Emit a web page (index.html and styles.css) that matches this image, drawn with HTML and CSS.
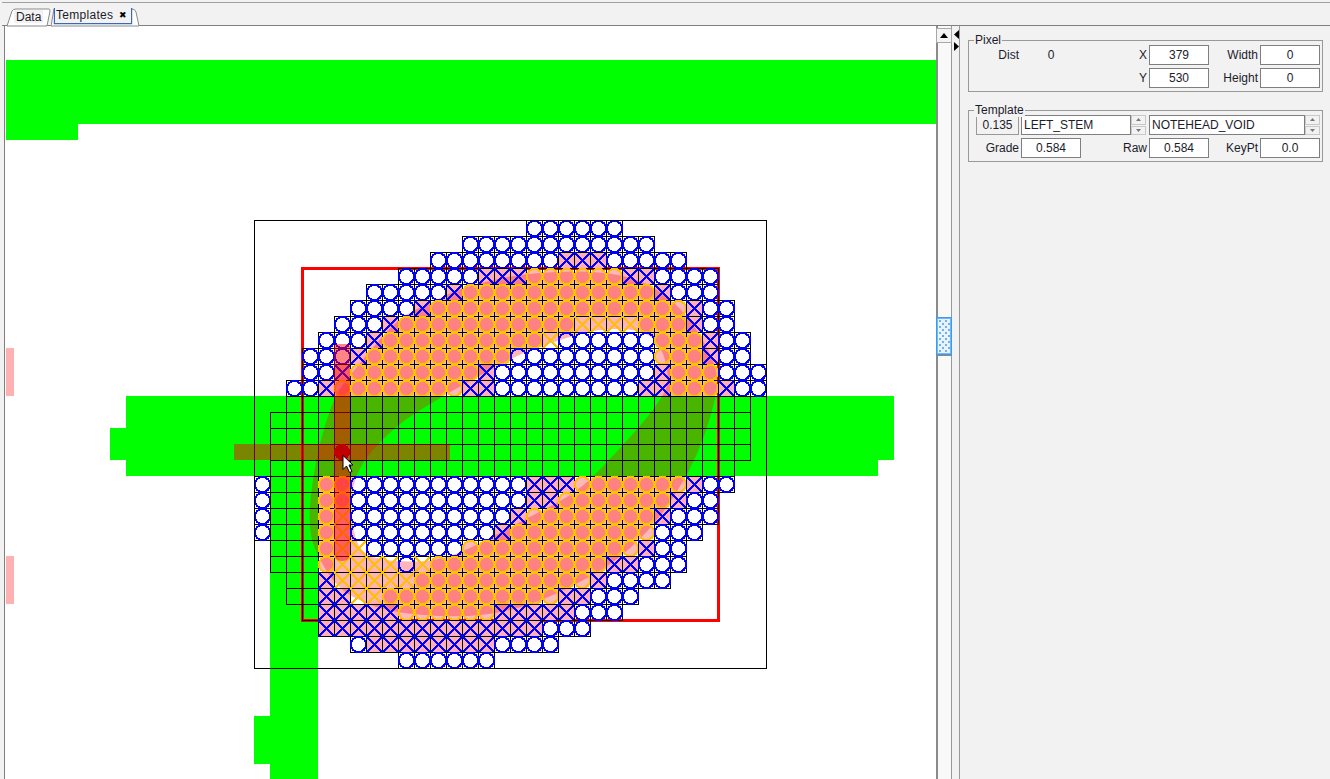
FILE: index.html
```html
<!DOCTYPE html>
<html lang="en">
<head>
<meta charset="utf-8">
<title>Templates</title>
<link rel="stylesheet" href="styles.css">
</head>
<body>
<div class="tabbar">
  <div class="tab tab-data">
    <svg class="tab-shape" width="44" height="24" viewBox="0 0 44 24"><path class="tab-fill" d="M0 23 L5 8 Q6 6 9 6 H42 Q43 6 43 8 L40 23 Z"/></svg>
    <span class="tab-label">Data</span>
  </div>
  <div class="tab tab-templates">
    <svg class="tab-shape" width="90" height="24" viewBox="0 0 90 24"><path class="tab-fill" d="M0 23 L3 6 H81 Q84 6 85 9 L88 23 Z"/><path class="tab-focus" d="M3.5 5 V20.5 H80.5 V5"/></svg>
    <span class="tab-label">Templates</span>
    <span class="tab-close">✖</span>
  </div>
</div>
<div class="main">
  <div class="canvas"><svg id="board" class="board" width="931" height="753" viewBox="5 26 931 753"></svg></div>
  <div class="scrollbar">
    <div class="scroll-btn"><svg width="8" height="5" viewBox="0 0 8 5"><path d="M4 0 L8 5 H0 Z"/></svg></div>
    <div class="scroll-thumb"></div>
  </div>
  <div class="divider">
    <svg width="5" height="9" viewBox="0 0 5 9"><path d="M5 0 V9 L0 4.5 Z"/></svg>
    <svg width="5" height="9" viewBox="0 0 5 9"><path d="M0 0 V9 L5 4.5 Z"/></svg>
  </div>
  <div class="panel">
    <section class="group group-pixel">
      <div class="legend">Pixel</div>
      <div class="form">
        <div class="lab">Dist</div><div class="val">0</div>
        <div class="lab">X</div><div class="field">379</div>
        <div class="lab">Width</div><div class="field">0</div>
        <div class="lab span-3">Y</div><div class="field">530</div>
        <div class="lab">Height</div><div class="field">0</div>
      </div>
    </section>
    <section class="group group-template">
      <div class="legend">Template</div>
      <div class="form">
        <div class="field readonly">0.135</div>
        <div class="combo combo-left">
          <div class="field name">LEFT_STEM</div>
          <div class="spin"><div class="spin-btn"><svg width="5" height="3" viewBox="0 0 5 3"><path d="M2.5 0 L5 3 H0 Z"/></svg></div><div class="spin-btn"><svg width="5" height="3" viewBox="0 0 5 3"><path d="M0 0 H5 L2.5 3 Z"/></svg></div></div>
        </div>
        <div class="combo combo-right">
          <div class="field name">NOTEHEAD_VOID</div>
          <div class="spin"><div class="spin-btn"><svg width="5" height="3" viewBox="0 0 5 3"><path d="M2.5 0 L5 3 H0 Z"/></svg></div><div class="spin-btn"><svg width="5" height="3" viewBox="0 0 5 3"><path d="M0 0 H5 L2.5 3 Z"/></svg></div></div>
        </div>
        <div class="lab">Grade</div><div class="field">0.584</div>
        <div class="lab">Raw</div><div class="field">0.584</div>
        <div class="lab">KeyPt</div><div class="field">0.0</div>
      </div>
    </section>
  </div>
</div>
<script src="app.js"></script>
</body>
</html>
```
FILE: styles.css
```css
* { box-sizing: border-box; }
html, body { margin: 0; padding: 0; }
body {
  width: 1330px; height: 779px; overflow: hidden;
  background: #f2f2f2; color: #1c1c2c;
  font: 12px/14px "Liberation Sans", Arial, sans-serif;
}

/* tabs */
.tabbar {
  height: 24px; margin: 2px 0 0 2px; padding-left: 5px;
  display: flex; align-items: flex-end;
  border-top: 1px solid #a0a0a0; border-bottom: 1px solid #808080;
}
.tab { position: relative; height: 23px; margin-bottom: -1px; }
.tab-data { width: 44px; }
.tab-templates { width: 90px; }
.tab-shape { position: absolute; left: 0; top: 0; }
.tab-fill { fill: #fff; stroke: #8a8a8a; stroke-width: 1; }
.tab-focus { fill: none; stroke: #3a6ab4; stroke-width: 1.4; }
.tab-label { position: absolute; background: #f2f2f2; }
.tab-data .tab-label { left: 7px; top: 7px; padding: 0 2px; height: 13px; }
.tab-templates .tab-label { left: 4px; top: 5px; width: 76px; height: 15px; padding-left: 1px; letter-spacing: 0.3px; }
.tab-close { position: absolute; left: 68px; top: 5px; font-size: 9px; color: #000; font-family: "DejaVu Sans", sans-serif; }

/* main row */
.main { display: flex; height: 753px; }
.canvas { width: 936px; padding-left: 4px; }
.board { display: block; background: #fff; border-left: 1px solid #808080; width: 932px; }
.scrollbar {
  width: 16px; padding-top: 2px; background: #f9f9f9;
  border-left: 2px solid #8a8a8a; border-right: 1px solid #999;
}
.scroll-btn {
  height: 15px; margin-left: -2px; margin-right: -1px;
  display: flex; align-items: center; justify-content: center;
  background: #f4f4f4; border: 1px solid #a8a8a8;
}
.scroll-thumb {
  height: 38px; margin: 274px -1px 0 -2px;
  border: 1px solid #3a9cf0;
  background-color: #e8f3fe;
  background-image: radial-gradient(#6cb0ec 0.7px, transparent 1px), radial-gradient(#6cb0ec 0.7px, transparent 1px);
  background-size: 6px 6px;
  background-position: 0 0, 3px 3px;
  box-shadow: inset 0 0 0 1px #6fb8f6, 0 1px 0 #888;
}
.divider {
  width: 8px; padding: 4px 0 0 2px;
  display: flex; flex-direction: column; gap: 3px;
  border-right: 1px solid #999;
}
.divider svg { display: block; }

/* right panel */
.panel { width: 370px; padding: 14px 7px 0 8px; }
.group { position: relative; border: 1px solid #999; padding: 4px 2px 3px 0; }
.group-template { margin-top: 18px; padding-bottom: 3px; }
.legend { position: absolute; left: 5px; top: -8px; padding: 0 1px; background: #f2f2f2; }
.form {
  display: grid; grid-template-columns: 52px 60px 68px 60px 51px 60px;
  grid-auto-rows: 20px; row-gap: 3px;
}
.lab { text-align: right; padding-right: 2px; line-height: 20px; }
.span-3 { grid-column: 3; }
.val { text-align: center; line-height: 20px; }
.field {
  background: #fff; border: 1px solid #7f7f7f;
  text-align: center; line-height: 18px;
}
.readonly { background: #f2f2f2; width: 43px; margin-left: 7px; border-color: #999; }
.combo { display: flex; }
.combo-left { grid-column: 2 / span 2; width: 125px; }
.combo-right { grid-column: 4 / span 3; }
.name { flex: 1; text-align: left; padding-left: 2px; }
.spin { width: 15px; display: flex; flex-direction: column; gap: 1px; }
.spin-btn {
  flex: 1; display: flex; align-items: center; justify-content: center;
  background: #f2f2f2; border: 1px solid #c8c8c8;
}
.spin-btn path { fill: #777; }

/* notehead canvas */
.green { fill: #00ff00; }
.pale { fill: #ffb0b0; }
.frame { fill: none; stroke: #000; stroke-width: 1; }
.redbox { fill: none; stroke: #ff0000; stroke-width: 3; }
.fill-o { fill: #fff; }
.fill-p { fill: #ffb8b8; }
.fill-x { fill: #ffb0b8; }
.shape { fill: rgba(255, 0, 0, 0.29); fill-rule: evenodd; }
.cell { fill: none; stroke: #000; stroke-width: 1; }
.ring-o { fill: none; stroke: #0000ff; stroke-width: 2.2; shape-rendering: crispEdges; }
.ring-p { fill: none; stroke: #ffc000; stroke-width: 2.2; shape-rendering: crispEdges; }
.cross-x { stroke: #0000ff; stroke-width: 2; shape-rendering: crispEdges; }
.cross-y { stroke: #ffc000; stroke-width: 2; shape-rendering: crispEdges; }
.stem { fill: rgba(255, 0, 0, 0.48); }
.dot { fill: #c00000; shape-rendering: crispEdges; }
.pointer { fill: #fff; stroke: #000; stroke-width: 1; stroke-linejoin: miter; }
```
FILE: app.js
```js
// Notehead template viewer: rows of cell runs, painted into the SVG canvas.
var NS = 'http://www.w3.org/2000/svg';
var board = document.getElementById('board');
var X0 = 254, Y0 = 220, C = 16;

var ROWS = [
  '17-22O',
  '13-24O',
  '11-18O 19-21X 22-26O',
  '9-13O 14-16X 17-22P 23-24X 25-28O',
  '7-11O 12-12X 13-24P 25-25X 26-28O',
  '6-9O 10-10X 11-26P 27-27X 28-29O',
  '5-7O 8-8X 9-19P 20-23Y 24-26P 27-27X 28-29O',
  '4-6O 7-7X 8-17P 18-18Y 19-24O 25-27P 28-28X 29-30O',
  '3-5O 6-6X 7-15P 16-24O 25-27P 28-28X 29-30O',
  '3-4O 5-5X 6-13P 14-14X 15-24O 25-25X 26-28P 29-31O',
  '2-3O 4-4X 5-12P 13-14X 15-23O 24-25X 26-28P 29-29X 30-31O',
  '2-30E',
  '1-30E',
  '1-30E',
  '1-30E',
  '1-29E',
  '0-0O 1-3E 4-5P 6-16O 17-19X 20-26P 27-27X 28-29O',
  '0-0O 1-3E 4-5P 6-16O 17-18X 19-25P 26-26X 27-28O',
  '0-0O 1-3E 4-4P 5-5Y 6-15O 16-16X 17-24P 25-25X 26-28O',
  '0-0O 1-3E 4-4P 5-5Y 6-14O 15-15X 16-24P 25-27O',
  '1-3E 4-4P 5-6Y 7-12O 13-23P 24-24X 25-26O',
  '1-3E 4-4P 5-8Y 9-9O 10-10Y 11-21P 22-23X 24-26O',
  '2-3E 4-4X 5-9Y 10-20P 21-21X 22-25O',
  '2-3E 4-5X 6-7Y 8-18P 19-20X 21-23O',
  '3-3E 4-8X 9-14P 15-19X 20-22O',
  '4-17X 18-20O',
  '6-6O 7-14X 15-18O',
  '9-14O'
];

var GREEN = [
  [6, 60, 930, 64], [6, 124, 72, 16],
  [126, 396, 768, 32], [110, 428, 784, 32], [126, 460, 752, 16],
  [270, 476, 48, 303], [254, 716, 16, 48]
];

var OUTER = [[307,530],[315,460],[333,398],[350,375],[367,355],[398,318],[430,303],[463,287],[527,272],[622,271],[677,300],[716,360],[718,396],[690,476],[633,552],[552,598],[483,618],[397,614],[357,600],[338,587],[322,565]];
var HOLE = [[351,522],[353,473],[393,427],[443,396],[463,385],[517,355],[553,342],[600,328],[643,330],[660,345],[668,368],[667,396],[595,476],[567,498],[533,515],[468,550],[432,562],[385,561],[360,553]];

function el(name, cls, attrs, parent) {
  var n = document.createElementNS(NS, name);
  if (cls) n.setAttribute('class', cls);
  for (var k in attrs) n.setAttribute(k, attrs[k]);
  (parent || board).appendChild(n);
  return n;
}

function smooth(pts) {
  var mid = function (a, b) { return ((a[0] + b[0]) / 2) + ' ' + ((a[1] + b[1]) / 2); };
  var n = pts.length, d = 'M' + mid(pts[n - 1], pts[0]);
  for (var i = 0; i < n; i++) {
    d += ' Q' + pts[i][0] + ' ' + pts[i][1] + ' ' + mid(pts[i], pts[(i + 1) % n]);
  }
  return d + ' Z';
}

GREEN.forEach(function (r) {
  el('rect', 'green', { x: r[0], y: r[1], width: r[2], height: r[3] });
});
el('rect', 'pale', { x: 6, y: 348, width: 8, height: 48 });
el('rect', 'pale', { x: 6, y: 556, width: 8, height: 48 });
el('rect', 'redbox', { x: 302.5, y: 268.5, width: 416, height: 352 });

var fills = el('g', '', {});
el('path', 'shape', { d: smooth(OUTER) + ' ' + smooth(HOLE) });
var lines = el('g', '', {});
el('rect', 'frame', { x: 254.5, y: 220.5, width: 512, height: 448 });

ROWS.forEach(function (spec, r) {
  spec.split(' ').forEach(function (run) {
    var m = /(\d+)-(\d+)([A-Z])/.exec(run);
    for (var c = +m[1]; c <= +m[2]; c++) {
      var x = X0 + c * C, y = Y0 + r * C, t = m[3];
      var cx = x + 8.5, cy = y + 8.5;
      el('rect', 'cell', { x: x + 0.5, y: y + 0.5, width: C, height: C }, lines);
      if (t === 'O') {
        el('circle', 'fill-o', { cx: cx, cy: cy, r: 7.2 }, fills);
        el('circle', 'ring-o', { cx: cx, cy: cy, r: 7.6 }, lines);
      } else if (t === 'P') {
        el('circle', 'fill-p', { cx: cx, cy: cy, r: 7.2 }, fills);
        el('circle', 'ring-p', { cx: cx, cy: cy, r: 7.6 }, lines);
      } else if (t === 'X' || t === 'Y') {
        if (t === 'X') el('rect', 'fill-x', { x: x, y: y, width: C, height: C }, fills);
        var k = t === 'X' ? 'cross-x' : 'cross-y';
        el('line', k, { x1: x + 0.5, y1: y + 0.5, x2: x + C + 0.5, y2: y + C + 0.5 }, lines);
        el('line', k, { x1: x + C + 0.5, y1: y + 0.5, x2: x + 0.5, y2: y + C + 0.5 }, lines);
      }
    }
  });
});

el('path', 'stem', { d: 'M337 344 H347 Q350 344 350 347 V444 H450 V460 H350 V552 Q350 561 342 561 Q334 561 334 552 V460 H234 V444 H334 V347 Q334 344 337 344 Z' });
el('circle', 'dot', { cx: 342, cy: 452, r: 8 });
el('path', 'pointer', { d: 'M343 455.5 V469.5 L346.5 466 L349.5 472.5 L352 471.5 L349 465 L353 465 Z' });
```
